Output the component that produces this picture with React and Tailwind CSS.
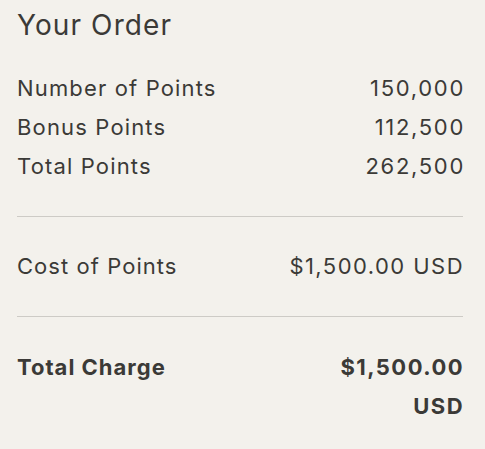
import React from 'react';

const rows = [
  { label: 'Number of Points', value: '150,000' },
  { label: 'Bonus Points', value: '112,500' },
  { label: 'Total Points', value: '262,500' },
];

export default function App() {
  return (
    <div className="min-h-[449px] w-[485px] bg-[#f3f1ec] text-[#3b3a37] pl-[17px] pr-[22px] pt-[5px]" style={{ fontFamily: 'Inter, "Noto Sans", sans-serif' }}>
      <h2 className="text-[28px] leading-[40px] font-normal tracking-[1.1px]">Your Order</h2>

      <div className="mt-[24px] pb-[30px] border-b border-[#cdcbc6]">
        {rows.map((r) => (
          <div key={r.label} className="flex justify-between text-[22px] leading-[39px] tracking-[1.15px]">
            <span>{r.label}</span>
            <span className="tracking-[1.7px] mr-[-2px]">{r.value}</span>
          </div>
        ))}
      </div>

      <div className="py-[30px] border-b border-[#cdcbc6]">
        <div className="flex justify-between text-[22px] leading-[39px] tracking-[1.05px]">
          <span>Cost of Points</span>
          <span className="tracking-[1.45px] mr-[-1px]">$1,500.00 USD</span>
        </div>
      </div>

      <div className="pt-[31px] flex justify-between text-[22px] leading-[39px] font-bold tracking-[1px]">
        <span>Total Charge</span>
        <span className="w-[130px] text-right tracking-[1.45px] mr-[-1px]">$1,500.00 USD</span>
      </div>
    </div>
  );
}
